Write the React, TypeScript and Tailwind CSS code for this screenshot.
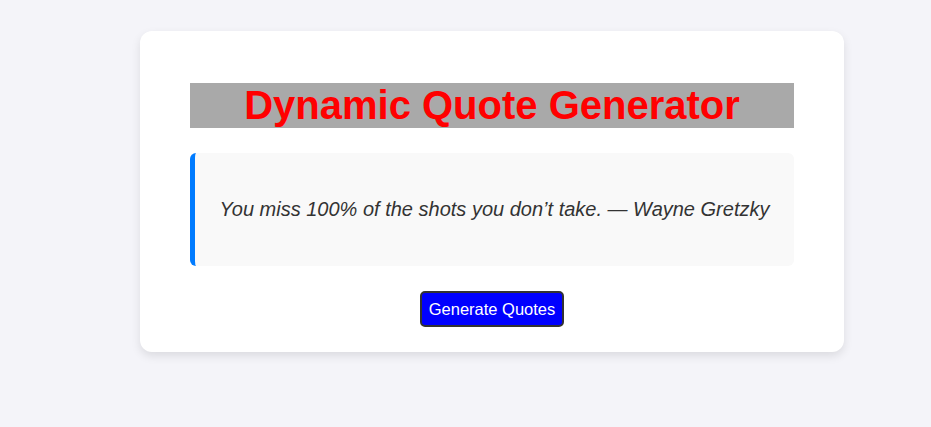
import React from "react";

export default function App() {
  return (
    <div className="w-[931px] h-[427px] bg-[#f4f4f9] pt-[31px]" style={{ fontFamily: '"Liberation Sans", Arial, sans-serif' }}>
      <div className="ml-[140px] w-[704px] h-[321px] bg-white rounded-[12px] shadow-[0_4px_10px_rgba(0,0,0,0.1)] pt-[52px] px-[50px] flex flex-col">
        <h1 className="bg-[#a9a9a9] text-[#ff0000] text-[40px] leading-[45px] h-[45px] font-bold text-center">
          Dynamic Quote Generator
        </h1>
        <div className="mt-[25px] h-[113px] bg-[#f9f9f9] border-l-[5px] border-[#007bff] rounded-[6px] flex items-center justify-center">
          <p className="italic text-[#333] text-[20px] leading-[23px]">
            You miss 100% of the shots you don’t take. — Wayne Gretzky
          </p>
        </div>
        <div className="mt-[25px] flex justify-center">
          <button className="bg-[#0000ff] text-white text-[16.5px] leading-[18px] border-2 border-[#333] rounded-[5px] px-[7px] py-[7px]">
            Generate Quotes
          </button>
        </div>
      </div>
    </div>
  );
}
